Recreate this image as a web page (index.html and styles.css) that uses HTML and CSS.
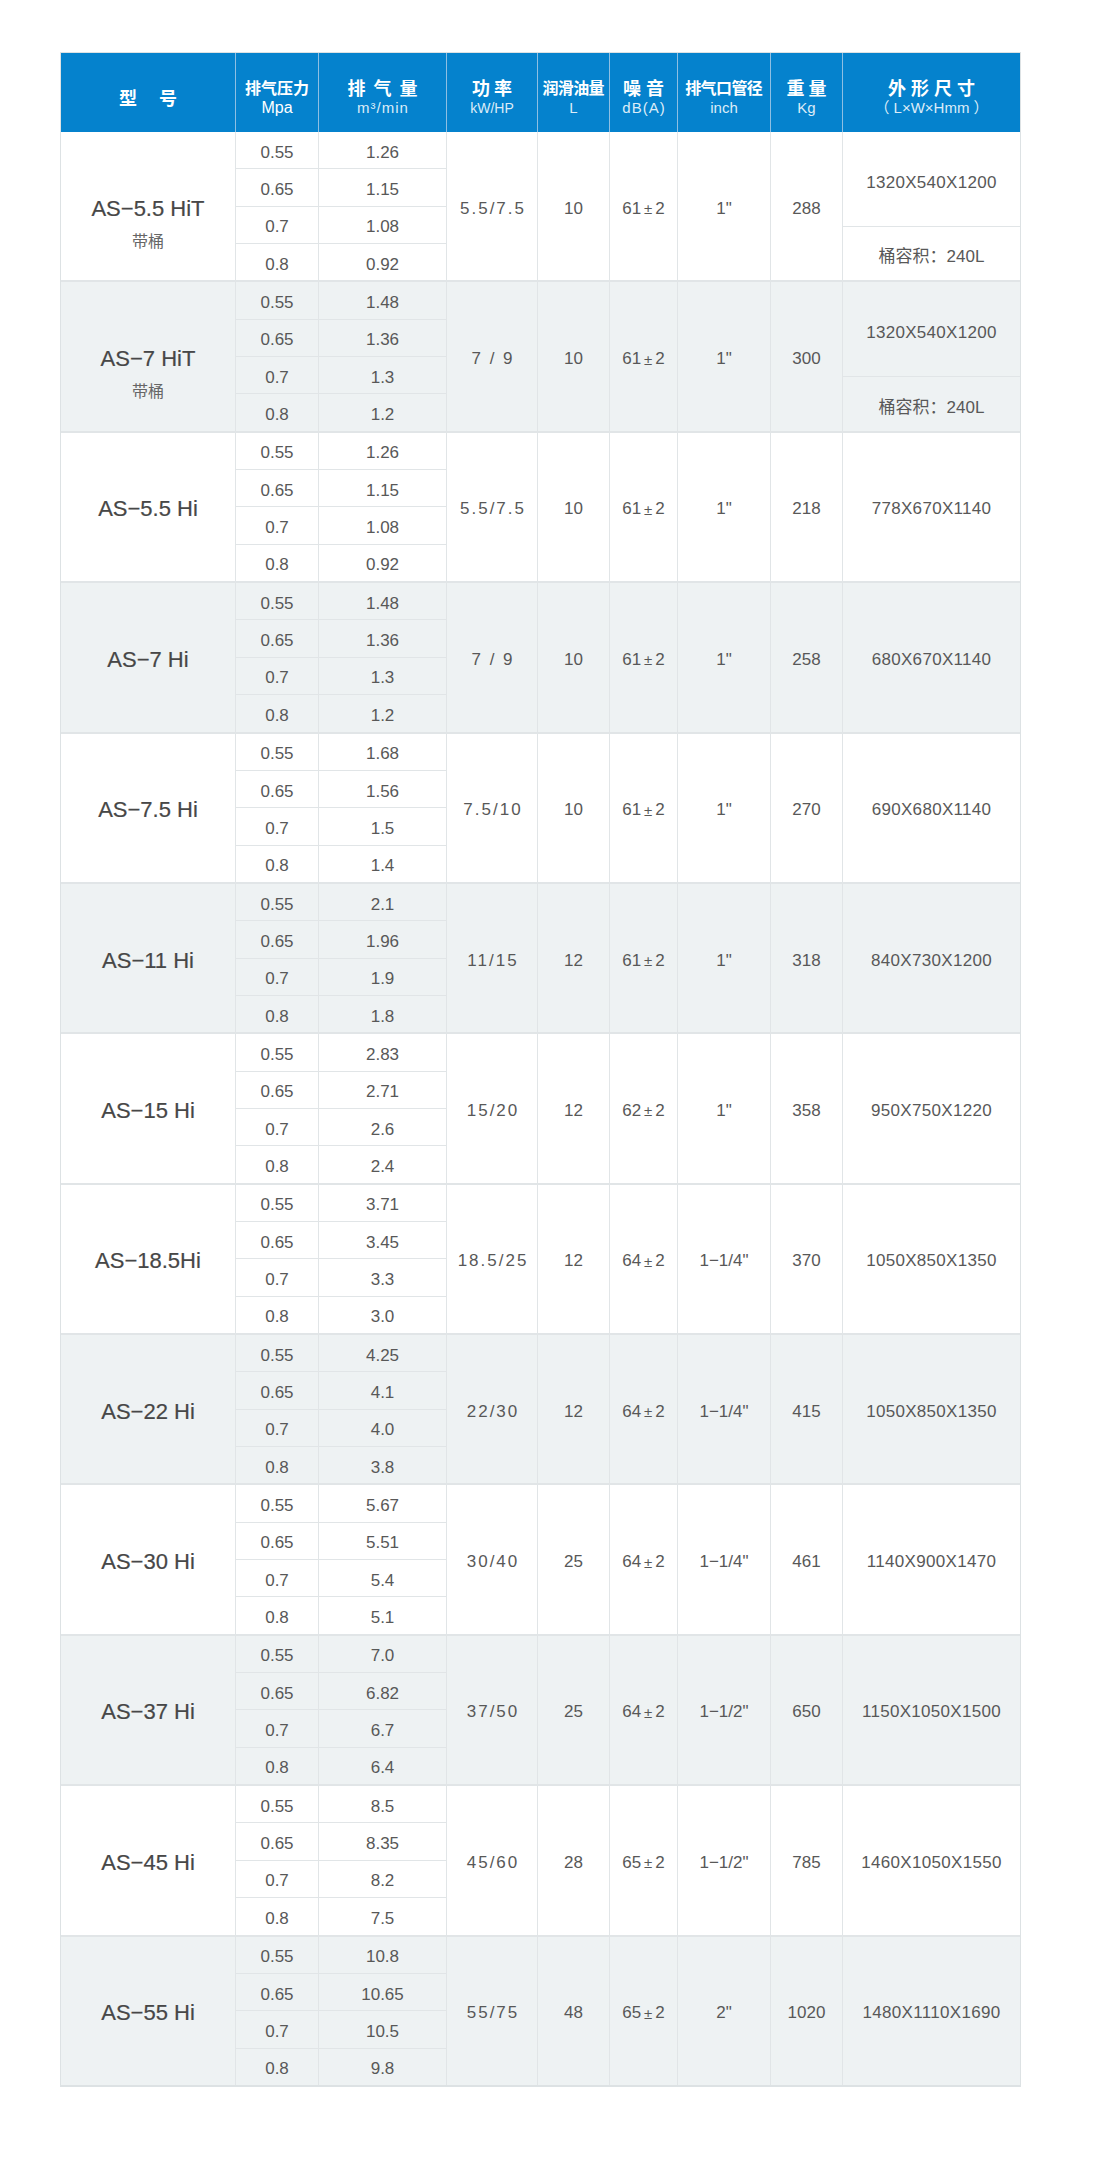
FILE: index.html
```html
<!DOCTYPE html>
<html lang="zh-CN">
<head>
<meta charset="utf-8">
<title>产品参数</title>
<link rel="stylesheet" href="styles.css">
</head>
<body>
<div class="spec">
  <div class="head">
    <div class="hc"><span class="h1 big ls18">型　号</span></div>
    <div class="hc"><span class="h1">排气压力</span><span class="h2 mpa">Mpa</span></div>
    <div class="hc"><span class="h1 big ls8">排气量</span><span class="h2 ls1">m³/min</span></div>
    <div class="hc"><span class="h1 big ls4">功率</span><span class="h2 s14">kW/HP</span></div>
    <div class="hc"><span class="h1 tight">润滑油量</span><span class="h2">L</span></div>
    <div class="hc"><span class="h1 big ls5">噪音</span><span class="h2 ls1">dB(A)</span></div>
    <div class="hc"><span class="h1 tight">排气口管径</span><span class="h2">inch</span></div>
    <div class="hc"><span class="h1 big ls4">重量</span><span class="h2">Kg</span></div>
    <div class="hc"><span class="h1 big ls5">外形尺寸</span><span class="h2">（ L×W×Hmm ）</span></div>
  </div>

  <div class="grp">
    <div class="c model sub"><span class="mn">AS−5.5 HiT</span><span class="ms">带桶</span></div>
    <div class="c">0.55</div><div class="c">1.26</div>
    <div class="c span pw">5.5/7.5</div>
    <div class="c span">10</div>
    <div class="c span">61<span class="pm">±</span>2</div>
    <div class="c span">1"</div>
    <div class="c span">288</div>
    <div class="span split"><div class="c dt">1320X540X1200</div><div class="c db">桶容积：240L</div></div>
    <div class="c">0.65</div><div class="c">1.15</div>
    <div class="c">0.7</div><div class="c">1.08</div>
    <div class="c">0.8</div><div class="c">0.92</div>
  </div>

  <div class="grp alt">
    <div class="c model sub"><span class="mn">AS−7 HiT</span><span class="ms">带桶</span></div>
    <div class="c">0.55</div><div class="c">1.48</div>
    <div class="c span pw">7 / 9</div>
    <div class="c span">10</div>
    <div class="c span">61<span class="pm">±</span>2</div>
    <div class="c span">1"</div>
    <div class="c span">300</div>
    <div class="span split"><div class="c dt">1320X540X1200</div><div class="c db">桶容积：240L</div></div>
    <div class="c">0.65</div><div class="c">1.36</div>
    <div class="c">0.7</div><div class="c">1.3</div>
    <div class="c">0.8</div><div class="c">1.2</div>
  </div>

  <div class="grp">
    <div class="c model"><span class="mn">AS−5.5 Hi</span></div>
    <div class="c">0.55</div><div class="c">1.26</div>
    <div class="c span pw">5.5/7.5</div>
    <div class="c span">10</div>
    <div class="c span">61<span class="pm">±</span>2</div>
    <div class="c span">1"</div>
    <div class="c span">218</div>
    <div class="c span dim">778X670X1140</div>
    <div class="c">0.65</div><div class="c">1.15</div>
    <div class="c">0.7</div><div class="c">1.08</div>
    <div class="c">0.8</div><div class="c">0.92</div>
  </div>

  <div class="grp alt">
    <div class="c model"><span class="mn">AS−7 Hi</span></div>
    <div class="c">0.55</div><div class="c">1.48</div>
    <div class="c span pw">7 / 9</div>
    <div class="c span">10</div>
    <div class="c span">61<span class="pm">±</span>2</div>
    <div class="c span">1"</div>
    <div class="c span">258</div>
    <div class="c span dim">680X670X1140</div>
    <div class="c">0.65</div><div class="c">1.36</div>
    <div class="c">0.7</div><div class="c">1.3</div>
    <div class="c">0.8</div><div class="c">1.2</div>
  </div>

  <div class="grp">
    <div class="c model"><span class="mn">AS−7.5 Hi</span></div>
    <div class="c">0.55</div><div class="c">1.68</div>
    <div class="c span pw">7.5/10</div>
    <div class="c span">10</div>
    <div class="c span">61<span class="pm">±</span>2</div>
    <div class="c span">1"</div>
    <div class="c span">270</div>
    <div class="c span dim">690X680X1140</div>
    <div class="c">0.65</div><div class="c">1.56</div>
    <div class="c">0.7</div><div class="c">1.5</div>
    <div class="c">0.8</div><div class="c">1.4</div>
  </div>

  <div class="grp alt">
    <div class="c model"><span class="mn">AS−11 Hi</span></div>
    <div class="c">0.55</div><div class="c">2.1</div>
    <div class="c span pw">11/15</div>
    <div class="c span">12</div>
    <div class="c span">61<span class="pm">±</span>2</div>
    <div class="c span">1"</div>
    <div class="c span">318</div>
    <div class="c span dim">840X730X1200</div>
    <div class="c">0.65</div><div class="c">1.96</div>
    <div class="c">0.7</div><div class="c">1.9</div>
    <div class="c">0.8</div><div class="c">1.8</div>
  </div>

  <div class="grp">
    <div class="c model"><span class="mn">AS−15 Hi</span></div>
    <div class="c">0.55</div><div class="c">2.83</div>
    <div class="c span pw">15/20</div>
    <div class="c span">12</div>
    <div class="c span">62<span class="pm">±</span>2</div>
    <div class="c span">1"</div>
    <div class="c span">358</div>
    <div class="c span dim">950X750X1220</div>
    <div class="c">0.65</div><div class="c">2.71</div>
    <div class="c">0.7</div><div class="c">2.6</div>
    <div class="c">0.8</div><div class="c">2.4</div>
  </div>

  <div class="grp">
    <div class="c model"><span class="mn">AS−18.5Hi</span></div>
    <div class="c">0.55</div><div class="c">3.71</div>
    <div class="c span pw">18.5/25</div>
    <div class="c span">12</div>
    <div class="c span">64<span class="pm">±</span>2</div>
    <div class="c span">1−1/4"</div>
    <div class="c span">370</div>
    <div class="c span dim">1050X850X1350</div>
    <div class="c">0.65</div><div class="c">3.45</div>
    <div class="c">0.7</div><div class="c">3.3</div>
    <div class="c">0.8</div><div class="c">3.0</div>
  </div>

  <div class="grp alt">
    <div class="c model"><span class="mn">AS−22 Hi</span></div>
    <div class="c">0.55</div><div class="c">4.25</div>
    <div class="c span pw">22/30</div>
    <div class="c span">12</div>
    <div class="c span">64<span class="pm">±</span>2</div>
    <div class="c span">1−1/4"</div>
    <div class="c span">415</div>
    <div class="c span dim">1050X850X1350</div>
    <div class="c">0.65</div><div class="c">4.1</div>
    <div class="c">0.7</div><div class="c">4.0</div>
    <div class="c">0.8</div><div class="c">3.8</div>
  </div>

  <div class="grp">
    <div class="c model"><span class="mn">AS−30 Hi</span></div>
    <div class="c">0.55</div><div class="c">5.67</div>
    <div class="c span pw">30/40</div>
    <div class="c span">25</div>
    <div class="c span">64<span class="pm">±</span>2</div>
    <div class="c span">1−1/4"</div>
    <div class="c span">461</div>
    <div class="c span dim">1140X900X1470</div>
    <div class="c">0.65</div><div class="c">5.51</div>
    <div class="c">0.7</div><div class="c">5.4</div>
    <div class="c">0.8</div><div class="c">5.1</div>
  </div>

  <div class="grp alt">
    <div class="c model"><span class="mn">AS−37 Hi</span></div>
    <div class="c">0.55</div><div class="c">7.0</div>
    <div class="c span pw">37/50</div>
    <div class="c span">25</div>
    <div class="c span">64<span class="pm">±</span>2</div>
    <div class="c span">1−1/2"</div>
    <div class="c span">650</div>
    <div class="c span dim">1150X1050X1500</div>
    <div class="c">0.65</div><div class="c">6.82</div>
    <div class="c">0.7</div><div class="c">6.7</div>
    <div class="c">0.8</div><div class="c">6.4</div>
  </div>

  <div class="grp">
    <div class="c model"><span class="mn">AS−45 Hi</span></div>
    <div class="c">0.55</div><div class="c">8.5</div>
    <div class="c span pw">45/60</div>
    <div class="c span">28</div>
    <div class="c span">65<span class="pm">±</span>2</div>
    <div class="c span">1−1/2"</div>
    <div class="c span">785</div>
    <div class="c span dim">1460X1050X1550</div>
    <div class="c">0.65</div><div class="c">8.35</div>
    <div class="c">0.7</div><div class="c">8.2</div>
    <div class="c">0.8</div><div class="c">7.5</div>
  </div>

  <div class="grp alt">
    <div class="c model"><span class="mn">AS−55 Hi</span></div>
    <div class="c">0.55</div><div class="c">10.8</div>
    <div class="c span pw">55/75</div>
    <div class="c span">48</div>
    <div class="c span">65<span class="pm">±</span>2</div>
    <div class="c span">2"</div>
    <div class="c span">1020</div>
    <div class="c span dim">1480X1110X1690</div>
    <div class="c">0.65</div><div class="c">10.65</div>
    <div class="c">0.7</div><div class="c">10.5</div>
    <div class="c">0.8</div><div class="c">9.8</div>
  </div>
</div>
</body>
</html>
```

FILE: styles.css
```css
html, body {
  margin: 0;
  padding: 0;
  background: #ffffff;
}

body {
  font-family: "Liberation Sans", "Noto Sans CJK SC", sans-serif;
  padding: 52px 0 72px 60px;
}

.spec {
  width: 961px;
  box-sizing: border-box;
  border: 1px solid #dde2e4;
  border-bottom-width: 2px;
  background: #ffffff;
}

.head,
.grp {
  display: grid;
  grid-template-columns: 174px 82px 127px 90px 71px 67px 92px 71px 177px;
  column-gap: 1px;
}

/* header */
.head {
  height: 79px;
  background: #8ebfe3;
}

.hc {
  background: #0582cd;
  color: #ffffff;
  display: flex;
  flex-direction: column;
  align-items: center;
  justify-content: center;
  padding-top: 9px;
  box-sizing: border-box;
  white-space: nowrap;
}

.h1 {
  font-family: "Noto Sans CJK SC", sans-serif;
  font-weight: 700;
  font-size: 16px;
  line-height: 22px;
}

.h1.big { font-size: 18px; }
.h1.tight { letter-spacing: -0.6px; margin-right: 0.6px; }
.ls18 { letter-spacing: 2px; margin-right: -2px; }
.ls8 { letter-spacing: 8px; margin-right: -8px; }
.ls4 { letter-spacing: 4px; margin-right: -4px; }
.ls5 { letter-spacing: 5px; margin-right: -5px; }

.h2 {
  font-family: "Liberation Sans", "Noto Sans CJK SC", sans-serif;
  font-weight: 400;
  font-size: 15px;
  line-height: 20px;
  color: #dcecf8;
}

.h2.mpa { font-size: 16px; color: #ffffff; }
.h2.s14 { font-size: 14px; }
.h2.ls1 { letter-spacing: 1px; margin-right: -1px; }

/* body groups */
.grp {
  grid-template-rows: repeat(4, 36.35px);
  row-gap: 1px;
  background: #e1e5e7;
  --bg: #ffffff;
}

.grp.alt { --bg: #eef2f3; }

.grp + .grp { border-top: 2px solid #e1e5e7; }

.c {
  background: var(--bg);
  display: flex;
  align-items: center;
  justify-content: center;
  padding-top: 5px;
  box-sizing: border-box;
  font-size: 17px;
  color: #585858;
  white-space: nowrap;
}

.span { grid-row: span 4; }

.pw { letter-spacing: 2px; padding-left: 2px; }

.pm {
  font-size: 15px;
  margin: 0 3px;
}

.dim { letter-spacing: 0.3px; }

.model {
  grid-row: span 4;
  flex-direction: column;
  color: #474747;
}

.model.sub { padding-top: 33px; }

.mn {
  font-size: 22px;
  line-height: 28px;
  -webkit-text-stroke: 0.2px #474747;
}

.ms {
  font-family: "Noto Sans CJK SC", sans-serif;
  font-size: 16px;
  line-height: 22px;
  margin-top: 6px;
  color: #666666;
}

.split {
  display: flex;
  flex-direction: column;
  row-gap: 1px;
  background: #e1e5e7;
}

.split .dt {
  height: 94px;
  flex: none;
  padding-top: 8px;
  letter-spacing: 0.3px;
}

.split .db {
  flex: 1;
  padding-top: 2px;
}
```
